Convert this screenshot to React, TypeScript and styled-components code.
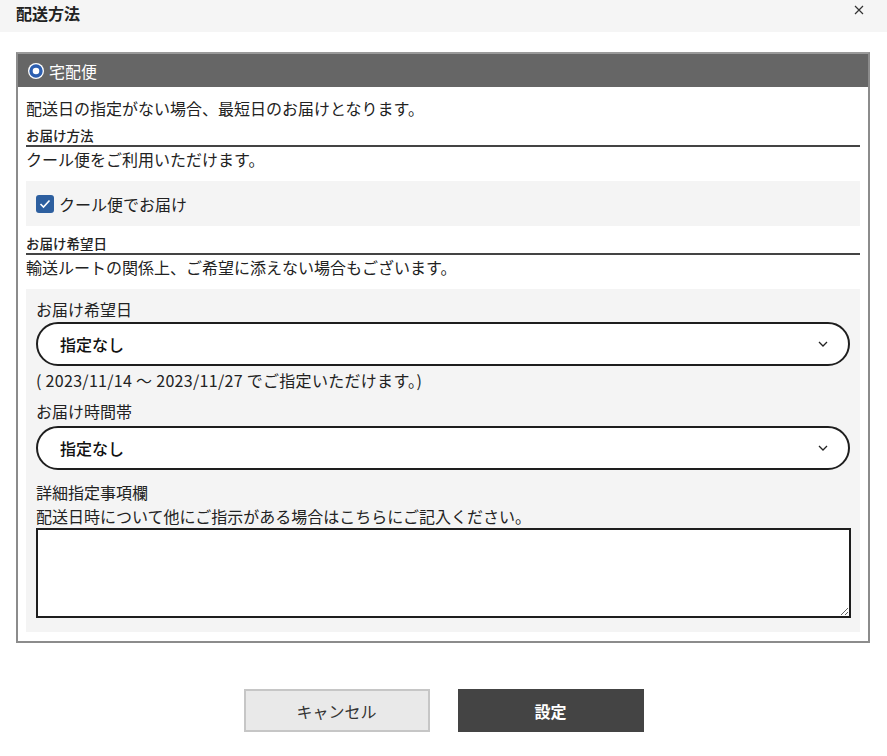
import React from 'react'
import styled, { createGlobalStyle } from 'styled-components'

const GlobalStyle = createGlobalStyle`
  html, body {
    margin: 0;
    padding: 0;
    background: #fff;
  }
  body {
    font-family: "Noto Sans CJK JP", "Noto Sans", sans-serif;
    color: #222;
    font-size: 16px;
  }
  * { box-sizing: border-box; }
`

const medium = `"Noto Sans CJK JP Medium", "Noto Sans CJK JP", sans-serif`

const Dialog = styled.div`
  width: 887px;
  min-height: 756px;
  background: #fff;
`

const TitleBar = styled.div`
  height: 32px;
  background: #f5f5f5;
  display: flex;
  align-items: center;
  justify-content: space-between;
  padding: 0 22px 0 16px;
`

const Title = styled.h1`
  margin: 0;
  font-size: 16px;
  font-weight: 700;
  line-height: 24px;
  color: #222;
  transform: translateY(-3px);
`

const CloseButton = styled.button`
  border: none;
  background: none;
  padding: 0;
  width: 12px;
  height: 12px;
  display: flex;
  align-items: center;
  justify-content: center;
  transform: translateY(-6px);
  cursor: pointer;
`

const Panel = styled.section`
  margin: 20px 17px 0 16px;
  border: 2px solid #8c8c8c;
  border-top-color: #9a9a9a;
  padding-bottom: 9px;
`

const PanelHeader = styled.div`
  height: 33px;
  background: #666;
  color: #fff;
  display: flex;
  align-items: center;
  gap: 5px;
  padding-left: 10px;
  font-size: 16px;
  line-height: 24px;
`

const PanelBody = styled.div`
  padding: 9px 8px 0 8px;
`

const Text = styled.p`
  margin: 0;
  font-size: 16px;
  line-height: 24px;
  color: #222;
`

const SectionTitle = styled.h2<{ $top?: number }>`
  margin: ${(p) => p.$top ?? 5}px 0 0;
  font-family: ${medium};
  font-size: 13.5px;
  font-weight: 500;
  line-height: 20px;
  color: #222;
  border-bottom: 2px solid #444;
`

const GrayBlock = styled.div<{ $pad?: string }>`
  margin-top: 10px;
  background: #f4f4f4;
  padding: ${(p) => p.$pad || '10px'};
`

const CheckLabel = styled.label`
  display: flex;
  align-items: center;
  gap: 5px;
  font-size: 16px;
  line-height: 24px;
  color: #222;
`

const CheckBox = styled.span`
  width: 18px;
  height: 18px;
  border-radius: 3px;
  background: #2d5f9f;
  display: inline-flex;
  align-items: center;
  justify-content: center;
`

const FieldLabel = styled.div<{ $top?: number }>`
  margin-top: ${(p) => p.$top || 0}px;
  font-size: 16px;
  line-height: 24px;
  color: #222;
`

const Select = styled.div<{ $top?: number }>`
  margin-top: ${(p) => p.$top ?? 1}px;
  height: 44px;
  border: 2px solid #1e1e1e;
  border-radius: 22px;
  background: #fff;
  display: flex;
  align-items: center;
  justify-content: space-between;
  padding: 0 20px 0 22px;
  font-family: ${medium};
  font-size: 16px;
  font-weight: 500;
  color: #111;
`

const Note = styled.div`
  margin-top: 2px;
  font-size: 16px;
  line-height: 24px;
  letter-spacing: 0.3px;
  color: #222;
`

const TextArea = styled.textarea`
  display: block;
  width: 815px;
  height: 90px;
  margin: 0;
  border: 2px solid #1e1e1e;
  background: #fff;
  resize: both;
  font-family: inherit;
`

const Footer = styled.div`
  margin-top: 46px;
  display: flex;
  justify-content: center;
  gap: 28px;
`

const Button = styled.button<{ $primary?: boolean }>`
  width: 186px;
  height: 43px;
  font-family: inherit;
  font-size: 16px;
  font-weight: ${(p) => (p.$primary ? 700 : 400)};
  color: ${(p) => (p.$primary ? '#fff' : '#333')};
  background: ${(p) => (p.$primary ? '#444' : '#e9e9e9')};
  border: 2px solid ${(p) => (p.$primary ? '#444' : '#c6c6c6')};
  cursor: pointer;
`

const RadioIcon = () => (
  <svg width="16" height="16" viewBox="0 0 16 16">
    <circle cx="8" cy="8" r="8" fill="#fff" />
    <circle cx="8" cy="8" r="5" fill="#fff" stroke="#2d5fb0" strokeWidth="3.4" />
  </svg>
)

const Chevron = () => (
  <svg width="10" height="6" viewBox="0 0 10 6">
    <path d="M1 1l4 4 4-4" fill="none" stroke="#222" strokeWidth="1.3" />
  </svg>
)

const App: React.FC = () => (
  <Dialog>
    <GlobalStyle />
    <TitleBar>
      <Title>配送方法</Title>
      <CloseButton aria-label="close">
        <svg width="10" height="10" viewBox="0 0 10 10">
          <path d="M1 1l8 8M9 1l-8 8" stroke="#333" strokeWidth="1.2" />
        </svg>
      </CloseButton>
    </TitleBar>

    <Panel>
      <PanelHeader>
        <RadioIcon />
        宅配便
      </PanelHeader>
      <PanelBody>
        <Text>配送日の指定がない場合、最短日のお届けとなります。</Text>
        <SectionTitle>お届け方法</SectionTitle>
        <Text>クール便をご利用いただけます。</Text>
        <GrayBlock $pad="11px 10px 10px">
          <CheckLabel>
            <CheckBox>
              <svg width="12" height="10" viewBox="0 0 12 10">
                <path d="M1.5 5l3 3 6-6.5" fill="none" stroke="#fff" strokeWidth="1.6" />
              </svg>
            </CheckBox>
            クール便でお届け
          </CheckLabel>
        </GrayBlock>
        <SectionTitle $top={7}>お届け希望日</SectionTitle>
        <Text>輸送ルートの関係上、ご希望に添えない場合もございます。</Text>
        <GrayBlock $pad="8px 10px 14px">
          <FieldLabel>お届け希望日</FieldLabel>
          <Select>
            指定なし
            <Chevron />
          </Select>
          <Note>( 2023/11/14 ～ 2023/11/27 でご指定いただけます。)</Note>
          <FieldLabel $top={7}>お届け時間帯</FieldLabel>
          <Select $top={3}>
            指定なし
            <Chevron />
          </Select>
          <FieldLabel $top={10}>詳細指定事項欄</FieldLabel>
          <FieldLabel>配送日時について他にご指示がある場合はこちらにご記入ください。</FieldLabel>
          <TextArea />
        </GrayBlock>
      </PanelBody>
    </Panel>

    <Footer>
      <Button>キャンセル</Button>
      <Button $primary>設定</Button>
    </Footer>
  </Dialog>
)

export default App
